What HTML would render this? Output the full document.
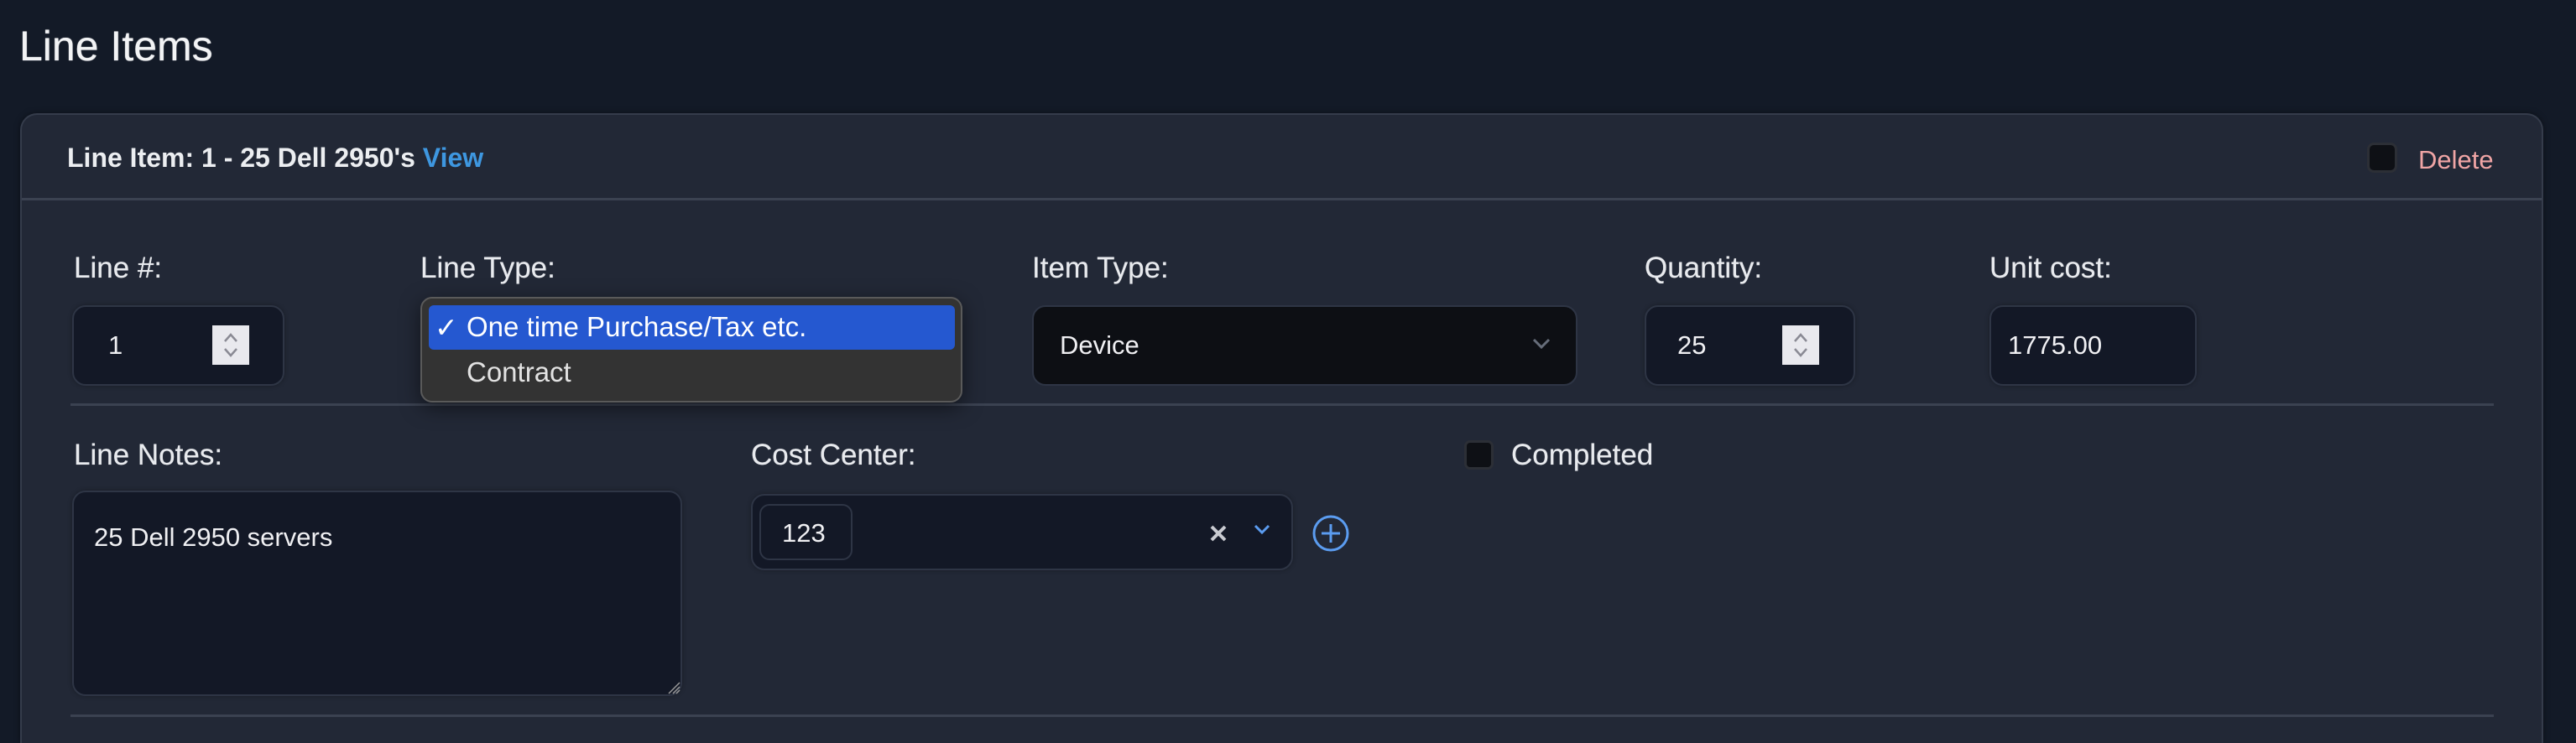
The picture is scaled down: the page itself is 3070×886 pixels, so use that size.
<!DOCTYPE html>
<html><head><style>
*{box-sizing:border-box;margin:0;padding:0}
html,body{width:3070px;height:886px;overflow:hidden}
body{background:#131a27;font-family:"Liberation Sans",sans-serif;color:#e6e8ec;position:relative}
.a{position:absolute}
.t{white-space:nowrap}
.card{left:24px;top:135px;width:3007px;height:751px;background:#222836;border:2px solid #353c4b;border-bottom:none;border-radius:20px 20px 0 0;box-shadow:0 0 8px rgba(0,0,0,.4)}
.lbl{font-size:35px;color:#e8eaee;text-shadow:0 0 .6px #e8eaee}
.inp{background:#131826;border:2px solid #2e3545;border-radius:16px;box-shadow:0 0 6px rgba(0,0,0,.3)}
.spin{background:#e9e9ee;width:44px;height:47px}
.spin svg{display:block}
.hr{height:3px;background:#3b4251}
.val{font-size:31px;color:#f0f0f3}
</style></head><body>
<div class="a t" style="left:23px;top:26px;font-size:50px;color:#f2f3f5;text-shadow:0 0 1px #f2f3f5">Line Items</div>
<div class="a card"></div>
<div class="a t" style="left:80px;top:170px;font-size:32px;font-weight:bold;color:#eceef1">Line Item: 1 - 25 Dell 2950's <span style="color:#3e97e0">View</span></div>
<div class="a" style="left:2821px;top:170px;width:36px;height:36px;background:#0e1015;border:3px solid #2c2f36;border-radius:8px"></div>
<div class="a t" style="left:2882px;top:173px;font-size:31px;color:#f0a5a5">Delete</div>
<div class="a" style="left:26px;top:236px;width:3003px;height:3px;background:#3b4251"></div>

<div class="a t lbl" style="left:88px;top:300px">Line #:</div>
<div class="a t lbl" style="left:501px;top:300px">Line Type:</div>
<div class="a t lbl" style="left:1230px;top:300px">Item Type:</div>
<div class="a t lbl" style="left:1960px;top:300px">Quantity:</div>
<div class="a t lbl" style="left:2371px;top:300px">Unit cost:</div>

<div class="a inp" style="left:86px;top:364px;width:253px;height:96px"></div>
<div class="a t val" style="left:129px;top:394px">1</div>
<div class="a spin" style="left:253px;top:388px"><svg width="44" height="47"><path d="M15 19 L22 11 L29 19 M15 28 L22 36 L29 28" stroke="#8a8a94" stroke-width="2.5" fill="none"/></svg></div>

<div class="a" style="left:1230px;top:364px;width:650px;height:96px;background:#0d0f14;border:2px solid #2e3545;border-radius:16px"></div>
<div class="a t val" style="left:1263px;top:394px">Device</div>
<svg class="a" style="left:1825px;top:402px" width="24" height="16"><path d="M3 3 L12 12 L21 3" stroke="#666d7a" stroke-width="3" fill="none"/></svg>

<div class="a inp" style="left:1960px;top:364px;width:251px;height:96px"></div>
<div class="a t val" style="left:1999px;top:394px">25</div>
<div class="a spin" style="left:2124px;top:388px"><svg width="44" height="47"><path d="M15 19 L22 11 L29 19 M15 28 L22 36 L29 28" stroke="#8a8a94" stroke-width="2.5" fill="none"/></svg></div>

<div class="a inp" style="left:2371px;top:364px;width:247px;height:96px"></div>
<div class="a t val" style="left:2393px;top:394px">1775.00</div>

<div class="a hr" style="left:84px;top:481px;width:2888px"></div>

<div class="a" style="left:501px;top:354px;width:646px;height:126px;background:#333333;border:2px solid #5a5a5a;border-radius:14px;box-shadow:0 6px 24px rgba(0,0,0,.5)"></div>
<div class="a" style="left:511px;top:364px;width:627px;height:53px;background:#2558d0;border-radius:6px"></div>
<div class="a t" style="left:518px;top:371px;font-size:33px;color:#fff">✓</div>
<div class="a t" style="left:556px;top:371px;font-size:33px;color:#fff">One time Purchase/Tax etc.</div>
<div class="a t" style="left:556px;top:425px;font-size:33px;color:#e2e2e2">Contract</div>

<div class="a t lbl" style="left:88px;top:523px">Line Notes:</div>
<div class="a t lbl" style="left:895px;top:523px">Cost Center:</div>
<div class="a" style="left:1745px;top:525px;width:35px;height:35px;background:#0e1015;border:3px solid #2c2f36;border-radius:7px"></div>
<div class="a t lbl" style="left:1801px;top:523px">Completed</div>

<div class="a inp" style="left:86px;top:585px;width:727px;height:245px"></div>
<div class="a t val" style="left:112px;top:623px">25 Dell 2950 servers</div>
<svg class="a" style="left:795px;top:812px" width="16" height="16"><path d="M2 15 L15 2 M7 15 L15 7 M11 15 L15 11" stroke="#999" stroke-width="1.5"/></svg>

<div class="a inp" style="left:895px;top:589px;width:646px;height:91px"></div>
<div class="a" style="left:905px;top:601px;width:111px;height:67px;border:2px solid #2e3545;border-radius:12px;background:#131826"></div>
<div class="a t val" style="left:932px;top:618px">123</div>
<svg class="a" style="left:1440px;top:624px" width="24" height="24"><path d="M4 4 L20 20 M20 4 L4 20" stroke="#c8cad0" stroke-width="4"/></svg>
<svg class="a" style="left:1493px;top:624px" width="22" height="16"><path d="M3 3 L11 11 L19 3" stroke="#5b9cf0" stroke-width="3" fill="none"/></svg>
<svg class="a" style="left:1563px;top:613px" width="46" height="46"><circle cx="23" cy="23" r="20" stroke="#5b9cf0" stroke-width="3" fill="none"/><path d="M23 12 V34 M12 23 H34" stroke="#5b9cf0" stroke-width="3"/></svg>

<div class="a hr" style="left:84px;top:852px;width:2888px"></div>
</body></html>
